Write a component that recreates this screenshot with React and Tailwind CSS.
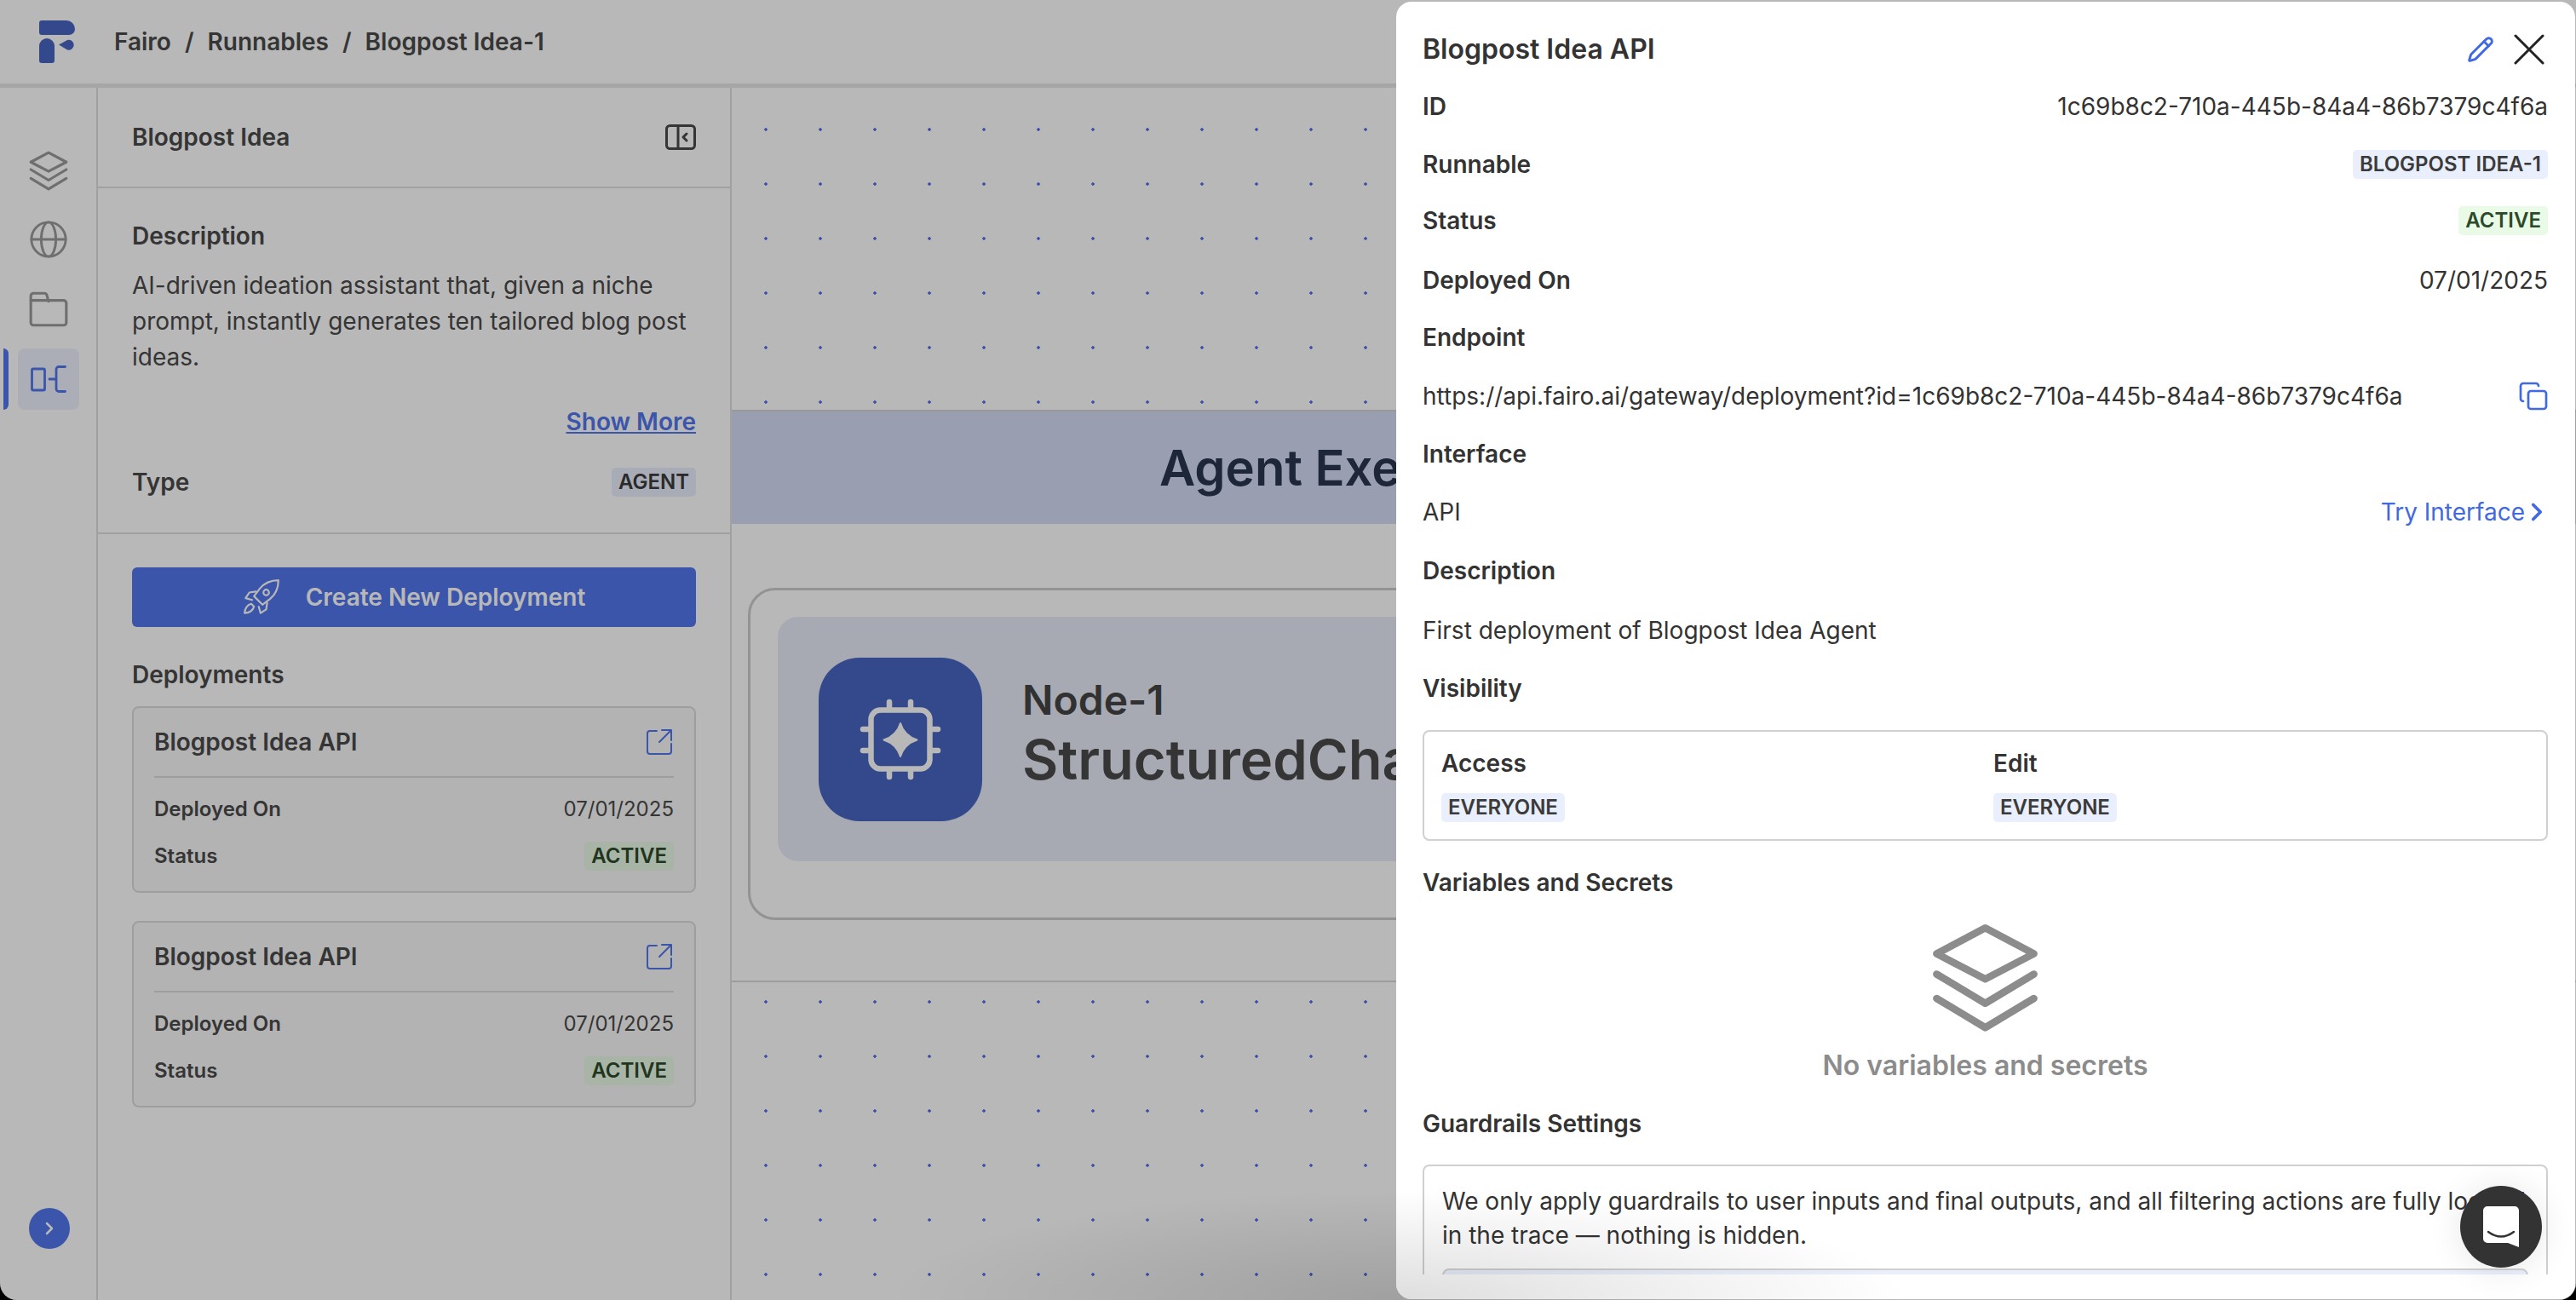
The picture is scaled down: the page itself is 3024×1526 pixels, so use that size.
import { ChevronRight, Pencil, Copy } from 'lucide-react';

const font = { fontFamily: 'Inter, sans-serif' };

function LayersIcon({ className }) {
  return (
    <svg viewBox="0 0 24 24" fill="none" stroke="currentColor" strokeWidth="1.5" strokeLinecap="round" strokeLinejoin="round" className={className}>
      <path d="M12 2.500 22 7.800 12 13 2 7.800z" />
      <path d="m2 12 10 6 10-6" />
      <path d="m2 17 10 6 10-6" />
    </svg>
  );
}

function GlobeIcon({ className }) {
  return (
    <svg viewBox="0 0 24 24" fill="none" stroke="currentColor" strokeWidth="1.500" strokeLinecap="round" className={className}>
      <circle cx="12" cy="12" r="10.500" />
      <ellipse cx="12" cy="12" rx="4.500" ry="10.500" />
      <path d="M1.500 12h21" />
    </svg>
  );
}

function FolderIcon({ className }) {
  return (
    <svg viewBox="0 0 24 24" fill="none" stroke="currentColor" strokeWidth="1.500" strokeLinecap="round" strokeLinejoin="round" className={className}>
      <path d="M2 7V4.500A1.500 1.500 0 0 1 3.500 3h6A1.500 1.500 0 0 1 11 4l1 3.500" />
      <path d="M2 7h18.500A1.500 1.500 0 0 1 22 8.500v11a1.500 1.500 0 0 1-1.500 1.500h-17A1.500 1.500 0 0 1 2 19.500z" />
    </svg>
  );
}

function RunnableIcon({ className }) {
  return (
    <svg viewBox="0 0 42 32" fill="none" stroke="currentColor" strokeWidth="2.800" strokeLinecap="round" strokeLinejoin="round" className={className}>
      <rect x="1.500" y="4" width="15" height="25" rx="1.500" />
      <path d="M22 16h7" />
      <path d="M40.500 1.500H33a3 3 0 0 0-3 3v23a3 3 0 0 0 3 3h7.500" />
    </svg>
  );
}

function ChipIcon({ className }) {
  return (
    <svg viewBox="0 0 96 96" fill="none" className={className}>
      <rect x="13.500" y="13.500" width="69" height="69" rx="11" stroke="#fff" strokeWidth="6.500" />
      <path d="M35 13V4M60 13V4M35 92V83M60 92V83M4 36h9M4 61h9M83 36h9M83 61h9" stroke="#fff" strokeWidth="6.500" strokeLinecap="round" />
      <path d="M48 29c3 10 9 16 19.500 19.500C57 52 51 58 48 68 45 58 39 52 28.500 48.500 39 45 45 39 48 29z" fill="#fff" stroke="#fff" strokeLinejoin="round" strokeWidth="2" />
    </svg>
  );
}

function RocketIcon({ className }) {
  return (
    <svg viewBox="0 0 40 40" fill="none" stroke="currentColor" strokeWidth="2" strokeLinecap="round" strokeLinejoin="round" className={className}>
      <path d="M38 2c-8 0-15 3-20 9l-6 8 9 9 8-6c6-5 9-12 9-20z" />
      <circle cx="25" cy="15" r="3" />
      <path d="M14 14 7 15l-4 6 7 2" />
      <path d="m26 26-1 7-6 4-2-7" />
      <path d="M9 27c-4 1-7 5-7 10 5 0 9-3 10-7z" />
    </svg>
  );
}

function OpenIcon() {
  return (
    <svg viewBox="0 0 32 32" fill="none" stroke="#5276ec" strokeWidth="2" strokeLinecap="round" strokeLinejoin="round" className="w-[32px] h-[32px] mr-[1px]">
      <path d="M13 3H5a3 3 0 0 0-3 3v21a3 3 0 0 0 3 3h22a3 3 0 0 0 3-3v-9" />
      <path d="M16 16 30 2M19 2h11v12" />
    </svg>
  );
}

function Logo() {
  return (
    <svg viewBox="0 0 42 50" className="w-[42px] h-[50px]" fill="#4866c2">
      <path d="M3 0h29a10 10 0 0 1 10 10a7 7 0 0 1-7 7H3a3 3 0 0 1-3-3V3a3 3 0 0 1 3-3z" />
      <path d="M9 21a9 9 0 0 1 9 9v17a3 3 0 0 1-3 3H3a3 3 0 0 1-3-3V30a9 9 0 0 1 9-9z" />
      <path d="M23 28.500 33 23a6 6 0 1 1 0 11.500z" />
    </svg>
  );
}

function NavItem({ children, active }) {
  return (
    <div className="relative h-[72px] flex items-center justify-center">
      {active && <div className="absolute left-[4px] top-0 bottom-0 w-[6px] rounded-r-md bg-[#5276ec]" />}
      <div className={`w-[72px] h-[72px] rounded-lg flex items-center justify-center ${active ? 'bg-[#eef2fd]' : ''}`}>
        {children}
      </div>
    </div>
  );
}

function Badge({ children, color }) {
  const cls = color === 'green' ? 'bg-[#e9fbe7] text-[#2c4a2a]' : 'bg-[#e9effc] text-[#3b3b3b]';
  return <span className={`inline-flex items-center h-[34px] px-[8px] rounded-[5px] text-[24px] font-[560] ${cls}`}>{children}</span>;
}

function DeploymentCard() {
  return (
    <div className="border-2 border-[#dcdcdc] rounded-lg px-[24px] h-[219px] bg-[#f9f9f9]">
      <div className="flex items-center justify-between h-[82px] border-b-2 border-[#dcdcdc]">
        <span className="text-[28px] font-semibold text-[#4a4a4a]">Blogpost Idea API</span>
        <OpenIcon />
      </div>
      <div className="flex items-center justify-between mt-[19px] text-[24px]">
        <span className="font-[560] text-[#4a4a4a]">Deployed On</span>
        <span className="text-[#4a4a4a]">07/01/2025</span>
      </div>
      <div className="flex items-center justify-between mt-[19px] text-[24px]">
        <span className="font-[560] text-[#4a4a4a]">Status</span>
        <Badge color="green">ACTIVE</Badge>
      </div>
    </div>
  );
}

function Canvas() {
  return (
    <div className="flex-1 relative overflow-hidden bg-[radial-gradient(circle,#5276ec_1.5px,transparent_2px)] bg-[length:64px_64px] bg-[position:8px_17px]">
      <div className="mt-[378px] h-[134px] bg-[#d4dbf6] border-t-2 border-[#d4d4d4] flex items-center pl-[502px]">
        <span className="text-[58px] font-semibold text-[#2a3550] whitespace-nowrap">Agent Execution</span>
      </div>
      <div className="bg-white h-[538px] border-b-2 border-[#d8d8d8] pt-[75px] pl-[19px]">
        <div className="w-[1400px] h-[390px] rounded-[32px] border-[3px] border-[#cccccc] pl-[32px] pt-[31px]">
          <div className="h-[287px] rounded-[24px] bg-[#e9ecf8] flex items-center pl-[48px] gap-[47px]">
            <div className="w-[192px] h-[192px] rounded-[48px] bg-[#4866c2] flex items-center justify-center shrink-0">
              <ChipIcon className="w-[96px] h-[96px]" />
            </div>
            <div className="flex flex-col pb-[12px]">
              <span className="text-[48px] leading-[56px] font-semibold text-[#454545]">Node-1</span>
              <span className="mt-[4px] text-[65px] leading-[76px] font-semibold text-[#4a4a4a] whitespace-nowrap">StructuredChatAgent</span>
            </div>
          </div>
        </div>
      </div>
    </div>
  );
}

function DetailRow({ label, children }) {
  return (
    <div className="flex items-center justify-between h-[34px]">
      <span className="text-[28px] font-[560] text-[#333]">{label}</span>
      {children}
    </div>
  );
}

function Modal() {
  return (
    <div className="absolute left-[1639px] right-[1px] top-[2px] bottom-[1px] bg-white rounded-[18px] overflow-hidden pl-[31px] pr-[32px] text-[#333]">
      <div className="flex items-center justify-between mt-[38px] h-[36px]">
        <span className="text-[32px] font-[560] text-[#333]">Blogpost Idea API</span>
        <div className="flex items-center gap-[24px] mr-[4px]">
          <Pencil className="w-[32px] h-[32px] text-[#4169e1] -mr-[1px]" strokeWidth={2.2} />
          <svg viewBox="0 0 36 36" fill="none" stroke="#222" strokeWidth="3" strokeLinecap="round" className="w-[36px] h-[36px]">
            <path d="M2 2l32 32M34 2 2 34" />
          </svg>
        </div>
      </div>
      <div className="mt-[32px]"><DetailRow label="ID"><span className="text-[28px]">1c69b8c2-710a-445b-84a4-86b7379c4f6a</span></DetailRow></div>
      <div className="mt-[34px]"><DetailRow label="Runnable"><Badge>BLOGPOST IDEA-1</Badge></DetailRow></div>
      <div className="mt-[32px]"><DetailRow label="Status"><Badge color="green">ACTIVE</Badge></DetailRow></div>
      <div className="mt-[36px]"><DetailRow label="Deployed On"><span className="text-[28px]">07/01/2025</span></DetailRow></div>
      <div className="mt-[33px]"><DetailRow label="Endpoint" /></div>
      <div className="flex items-center justify-between mt-[35px] h-[34px]">
        <span className="text-[28px]">https://api.fairo.ai/gateway/deployment?id=1c69b8c2-710a-445b-84a4-86b7379c4f6a</span>
        <Copy className="w-[36px] h-[36px] text-[#4169e1] -mr-[1px]" strokeWidth={1.8} />
      </div>
      <div className="mt-[34px]"><DetailRow label="Interface" /></div>
      <div className="flex items-center justify-between mt-[34px] h-[34px]">
        <span className="text-[28px]">API</span>
        <span className="flex items-center text-[28px] text-[#4169e1] -mr-[4px]">Try Interface<ChevronRight className="w-[34px] h-[34px] -ml-[3px]" strokeWidth={2.6} /></span>
      </div>
      <div className="mt-[35px]"><DetailRow label="Description" /></div>
      <p className="mt-[36px] h-[34px] text-[28px] leading-[34px]">First deployment of Blogpost Idea Agent</p>
      <div className="mt-[34px]"><DetailRow label="Visibility" /></div>
      <div className="mt-[32px] h-[130px] border-2 border-[#d0d0d0] rounded-lg grid grid-cols-[648px_1fr] px-[20px] pt-[20px]">
        <div>
          <div className="text-[28px] font-[560] h-[34px] leading-[34px]">Access</div>
          <div className="mt-[18px]"><Badge>EVERYONE</Badge></div>
        </div>
        <div>
          <div className="text-[28px] font-[560] h-[34px] leading-[34px]">Edit</div>
          <div className="mt-[18px]"><Badge>EVERYONE</Badge></div>
        </div>
      </div>
      <div className="mt-[32px]"><DetailRow label="Variables and Secrets" /></div>
      <div className="flex flex-col items-center mt-[22px]">
        <LayersIcon className="w-[137px] h-[137px] text-[#8c8c8c]" />
        <span className="mt-[20px] text-[32px] font-[560] text-[#8c8c8c] leading-[38px]">No variables and secrets</span>
      </div>
      <div className="mt-[32px]"><DetailRow label="Guardrails Settings" /></div>
      <div className="mt-[31px] border-2 border-[#d0d0d0] rounded-lg px-[21px] pt-[21px] h-[200px]">
        <p className="text-[28px] leading-[40px]">We only apply guardrails to user inputs and final outputs, and all filtering actions are fully logged in the trace — nothing is hidden.</p>
        <div className="mt-[19px] h-[80px] bg-[#e9effc] border-2 border-[#d0d0d0] rounded-lg" />
      </div>
      <div className="absolute left-0 right-0 bottom-0 h-[29px] bg-white" />
    </div>
  );
}

export default function App() {
  return (
    <div className="w-[3024px] h-[1526px] bg-black overflow-hidden" style={font}>
      <div className="relative w-full h-full rounded-b-[20px] overflow-hidden bg-white flex flex-col">
        <header className="h-[103px] border-b-[5px] border-[#e6e6e6] flex items-center pl-[46px] shrink-0">
          <Logo />
          <nav className="ml-[46px] flex items-center gap-[16px] text-[28px] font-[560] text-[#4a4a4a]">
            <span>Fairo</span><span>/</span><span>Runnables</span><span>/</span><span>Blogpost Idea-1</span>
          </nav>
        </header>
        <div className="flex flex-1 min-h-0">
          <aside className="w-[115px] border-r-2 border-[#e0e0e0] flex flex-col items-stretch pt-[60px] pb-[60px] shrink-0">
            <div className="flex flex-col gap-[10px]">
              <NavItem><LayersIcon className="w-[50px] h-[50px] text-[#9a9a9a]" /></NavItem>
              <NavItem><GlobeIcon className="w-[46px] h-[46px] text-[#9a9a9a]" /></NavItem>
              <NavItem><FolderIcon className="w-[50px] h-[50px] text-[#9a9a9a]" /></NavItem>
              <NavItem active><RunnableIcon className="w-[42px] h-[32px] text-[#5276ec]" /></NavItem>
            </div>
            <div className="mt-auto flex justify-center pl-[3px]">
              <div className="w-[48px] h-[48px] rounded-full bg-[#5276ec] flex items-center justify-center">
                <ChevronRight className="w-[24px] h-[24px] text-white" strokeWidth={2.5} />
              </div>
            </div>
          </aside>
          <section className="w-[744px] border-r-2 border-[#e0e0e0] shrink-0 flex flex-col">
            <div className="h-[118px] border-b-2 border-[#e0e0e0] px-[40px] flex items-center justify-between">
              <span className="text-[28px] font-semibold text-[#4a4a4a]">Blogpost Idea</span>
              <svg viewBox="0 0 36 30" fill="none" stroke="#4a4a4a" strokeWidth="3" strokeLinecap="round" strokeLinejoin="round" className="w-[36px] h-[30px]">
                <rect x="1.500" y="1.500" width="33" height="27" rx="4" />
                <path d="M15 1.500v27M25 11l-4 4 4 4" />
              </svg>
            </div>
            <div className="h-[406px] border-b-2 border-[#e0e0e0] px-[40px] pt-[38px]">
              <div className="text-[28px] font-[560] text-[#4a4a4a] leading-[36px]">Description</div>
              <p className="mt-[19px] text-[28px] leading-[42px] text-[#4a4a4a]">AI-driven ideation assistant that, given a niche prompt, instantly generates ten tailored blog post ideas.</p>
              <div className="mt-[34px] flex justify-end"><span className="text-[28px] font-[560] text-[#5276ec] underline">Show More</span></div>
              <div className="mt-[29px] flex items-center justify-between">
                <span className="text-[28px] font-[560] text-[#4a4a4a]">Type</span>
                <Badge>AGENT</Badge>
              </div>
            </div>
            <div className="px-[40px] pt-[39px]">
              <div className="h-[70px] rounded-md bg-[#5276ec] flex items-center justify-center gap-[30px] text-white">
                <RocketIcon className="w-[44px] h-[44px]" />
                <span className="text-[28px] font-[560]">Create New Deployment</span>
              </div>
              <div className="mt-[38px] text-[28px] font-semibold text-[#4a4a4a] leading-[36px]">Deployments</div>
              <div className="mt-[19px] flex flex-col gap-[33px]">
                <DeploymentCard />
                <DeploymentCard />
              </div>
            </div>
          </section>
          <Canvas />
        </div>
        <div className="absolute inset-0 bg-black/[0.28]" />
        <Modal />
        <div className="absolute left-[1040px] top-[1396px] w-[1200px] h-[130px] bg-[radial-gradient(ellipse_600px_130px_at_600px_130px,rgba(0,0,0,0.13),transparent)] pointer-events-none" />
        <div className="absolute left-[2888px] top-[1392px] w-[96px] h-[96px] rounded-full bg-[#333] flex items-center justify-center shadow-[0_2px_40px_rgba(0,0,0,0.1)]">
          <svg viewBox="0 0 42 48" className="w-[42px] h-[48px]">
            <path d="M5 0h32a5 5 0 0 1 5 5v43l-13-5H5a5 5 0 0 1-5-5V5a5 5 0 0 1 5-5z" fill="#fff" />
            <path d="M6 30q15 11 30 0" fill="none" stroke="#333" strokeWidth="2.500" strokeLinecap="round" />
          </svg>
        </div>
      </div>
    </div>
  );
}
